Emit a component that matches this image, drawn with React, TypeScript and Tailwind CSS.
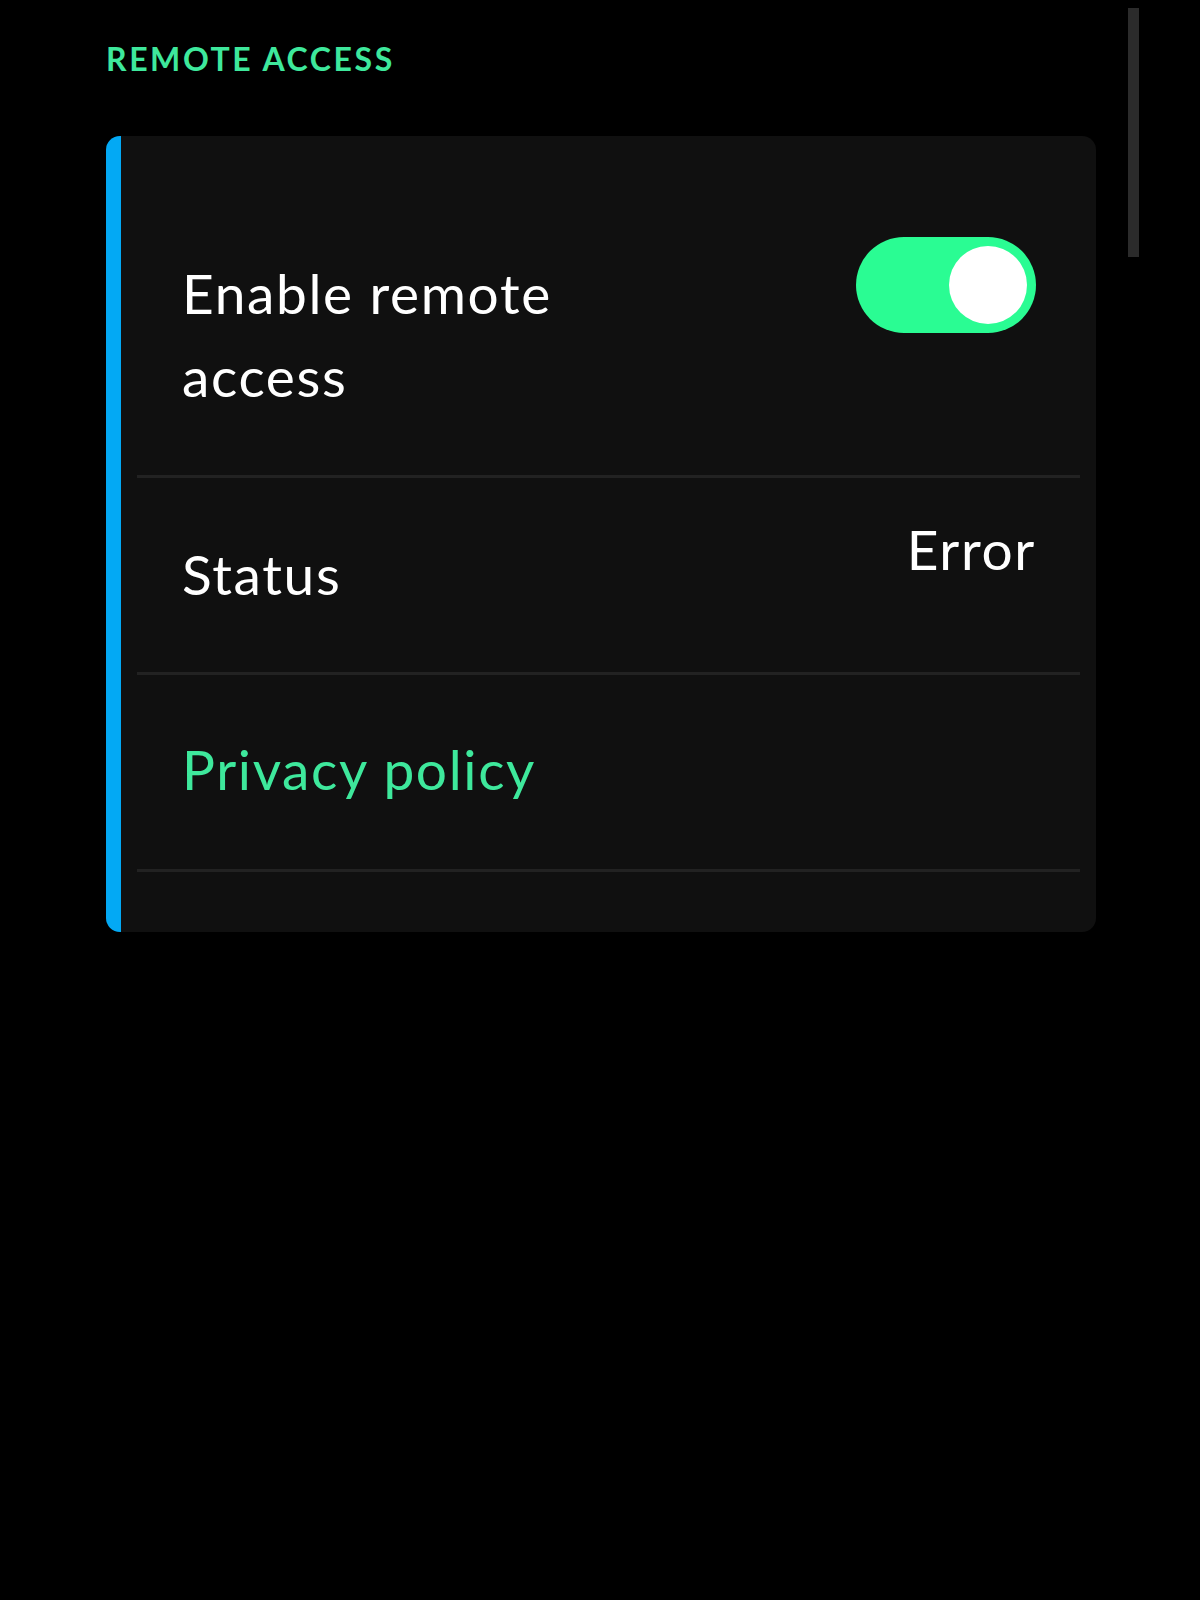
const Toggle = ({ on }: { on: boolean }) => (
  <div
    className={`flex h-[96px] w-[180px] items-center rounded-full px-[9px] ${
      on ? "justify-end bg-[#2afc93]" : "justify-start bg-[#3a3a3a]"
    }`}
  >
    <div className="h-[78px] w-[78px] rounded-full bg-white" />
  </div>
);

const Divider = () => <div className="mx-[16px] h-[3px] bg-[#222222]" />;

const App = () => {
  return (
    <div
      className="relative min-h-[1600px] bg-black text-white"
      style={{ fontFamily: "Lato, 'Noto Sans', sans-serif" }}
    >
      <div className="absolute right-[61px] top-[8px] h-[249px] w-[11px] bg-[#2b2b2b]" />

      <div className="pl-[106px] pr-[104px] pt-[39px]">
        <h2 className="text-[32px] font-bold leading-[40px] tracking-[0.08em] text-[#3ee89c]">
          REMOTE ACCESS
        </h2>

        <div className="mt-[57px] flex flex-col rounded-[14px] border-l-[15px] border-[#03a9f4] bg-[#101010]">
          <div className="flex h-[339px] items-start justify-between pl-[61px] pr-[60px] pt-[101px]">
            <p className="mt-[15px] w-[440px] text-[55px] leading-[83px] tracking-[0.03em]">
              Enable remote access
            </p>
            <Toggle on />
          </div>
          <Divider />
          <div className="flex h-[194px] items-start justify-between pl-[61px] pr-[60px]">
            <p className="mt-[55px] text-[55px] leading-[83px] tracking-[0.03em]">Status</p>
            <p className="mt-[30px] text-[55px] leading-[83px] tracking-[0.03em]">Error</p>
          </div>
          <Divider />
          <div className="flex h-[194px] items-start pl-[61px] pr-[60px]">
            <p className="mt-[53px] text-[55px] leading-[83px] tracking-[0.03em] text-[#3ee89c]">
              Privacy policy
            </p>
          </div>
          <Divider />
          <div className="h-[60px]" />
        </div>
      </div>
    </div>
  );
};

export default App;
